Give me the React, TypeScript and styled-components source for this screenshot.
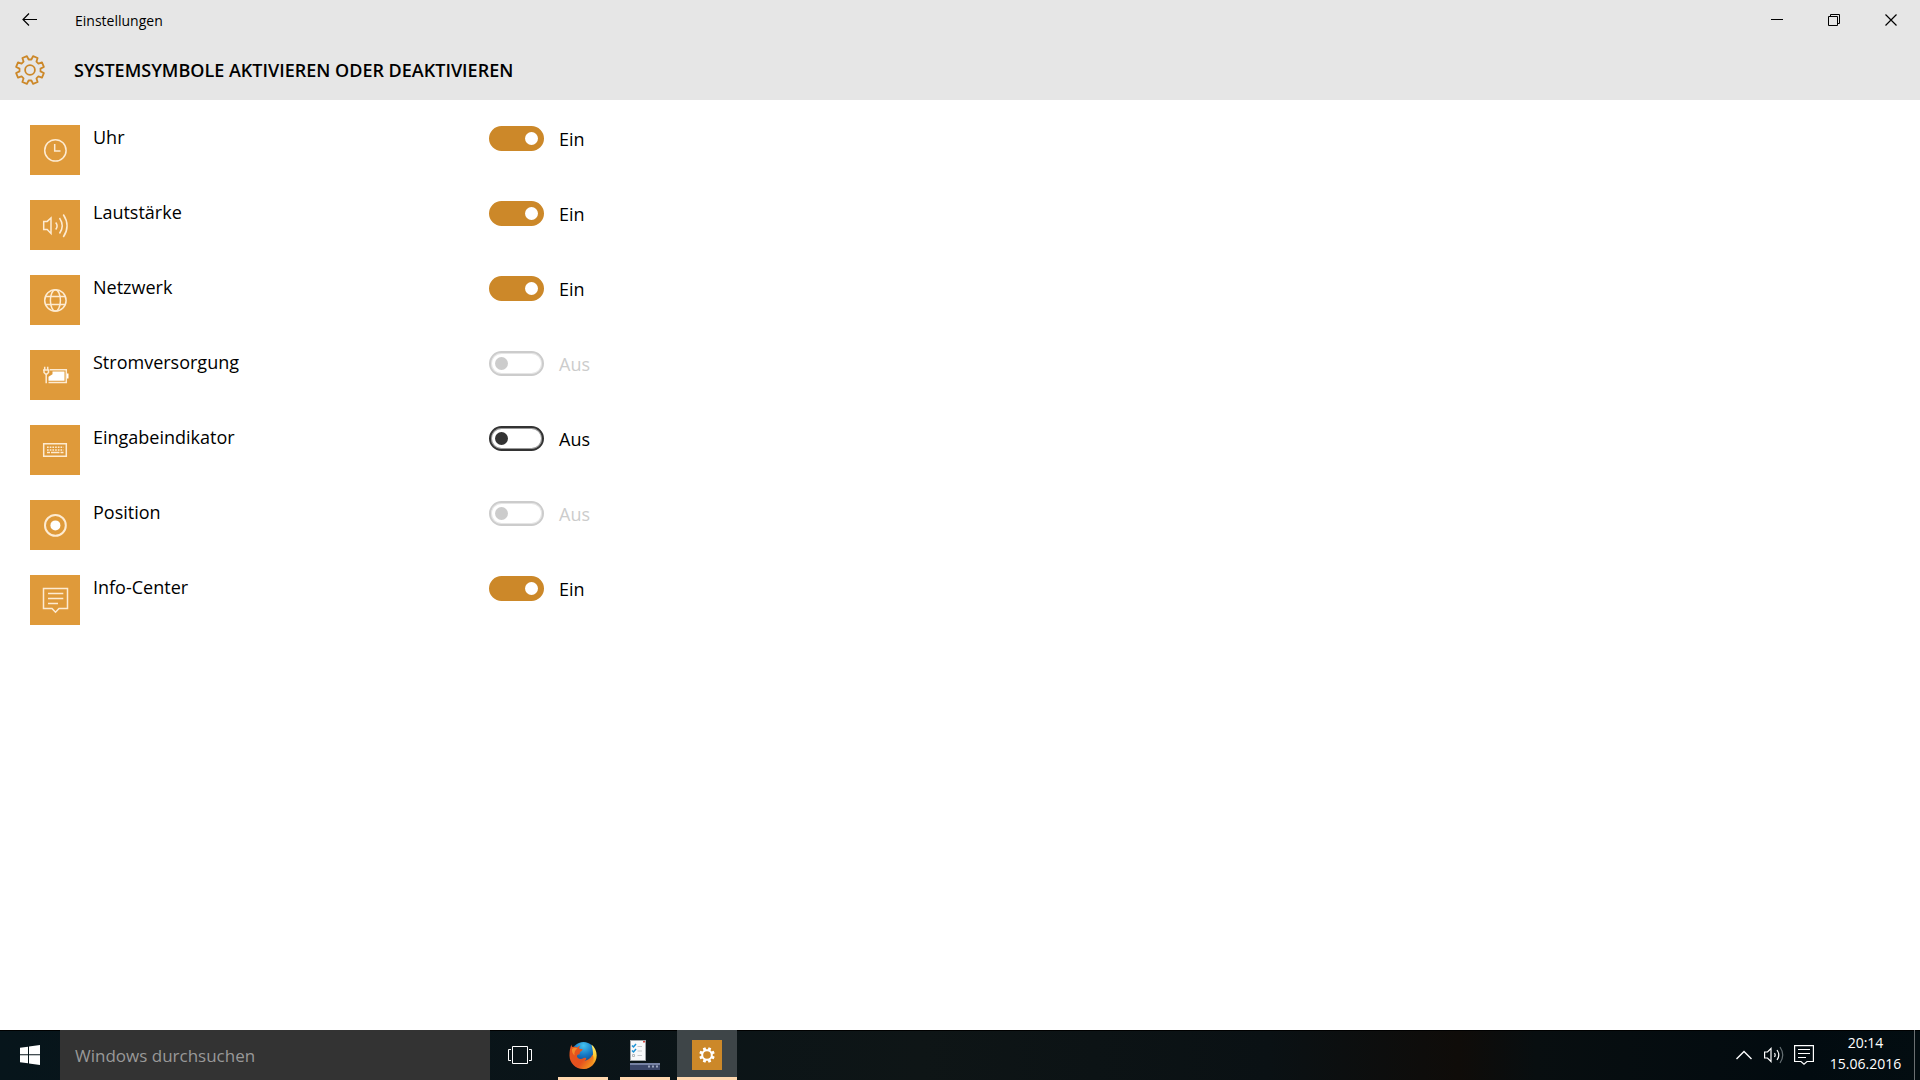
import React, { useState } from "react";
import styled, { createGlobalStyle, css } from "styled-components";

const colors = {
  accent: "#cc8829",
  tile: "#df9a3a",
  header: "#e6e6e6",
  disabled: "#cccccc",
  dark: "#333333",
  underline: "#ffd7ae",
};

const GlobalStyle = createGlobalStyle`
  *, *::before, *::after { box-sizing: border-box; }
  body {
    margin: 0;
    background: #fff;
    color: #000;
    font-family: "Open Sans", "Noto Sans", sans-serif;
  }
  button, input { font: inherit; color: inherit; }
`;

const Screen = styled.div`
  display: flex;
  flex-direction: column;
  min-height: 100vh;
`;

const Header = styled.header`
  background: ${colors.header};
`;

const TitleBar = styled.div`
  display: flex;
  height: 40px;
`;

const plainButton = css`
  display: flex;
  align-items: center;
  justify-content: center;
  padding: 0;
  border: 0;
  background: transparent;
`;

const BackButton = styled.button`
  ${plainButton}
  width: 60px;
`;

const WindowTitle = styled.span`
  flex: 1;
  padding-left: 15px;
  font-size: 14px;
  line-height: 42px;
`;

const WindowButton = styled.button`
  ${plainButton}
  width: 57px;
`;

const Heading = styled.div`
  display: flex;
  align-items: center;
  height: 60px;
`;

const HeadingIcon = styled.span`
  display: flex;
  justify-content: center;
  width: 60px;
`;

const PageTitle = styled.h1`
  margin: 0;
  padding-left: 14px;
  font-size: 18px;
  font-weight: 600;
  line-height: 24px;
`;

const Settings = styled.main`
  flex: 1;
  padding: 25px 30px;
`;

const SettingList = styled.ul`
  display: flex;
  flex-direction: column;
  gap: 25px;
  margin: 0;
  padding: 0;
  list-style: none;
`;

const SettingRow = styled.li`
  display: grid;
  grid-template-columns: 50px 383px 55px auto;
  column-gap: 13px;
  align-items: start;
`;

const Tile = styled.span`
  display: flex;
  align-items: center;
  justify-content: center;
  width: 50px;
  height: 50px;
  background: ${colors.tile};
`;

const SettingName = styled.label`
  font-size: 18px;
  line-height: 25px;
`;

const Toggle = styled.input`
  display: flex;
  align-items: center;
  appearance: none;
  width: 55px;
  height: 25px;
  margin: 1px 0 0;
  padding: 0 4px;
  border: 2px solid ${colors.dark};
  border-radius: 13px;
  box-shadow: inset 0 0 0 1px #999;

  &::before {
    content: "";
    width: 13px;
    height: 13px;
    border-radius: 50%;
    background: ${colors.dark};
  }
  &:checked {
    justify-content: flex-end;
    border-color: ${colors.accent};
    background: ${colors.accent};
    box-shadow: none;
  }
  &:checked::before { background: #fff; }
  &:disabled {
    border-color: ${colors.disabled};
    box-shadow: inset 0 0 0 1px #e6e6e6;
  }
  &:disabled::before { background: ${colors.disabled}; }
`;

const ToggleState = styled.output<{ $muted?: boolean }>`
  padding: 2px 0 0 2px;
  font-size: 18px;
  line-height: 25px;
  color: ${(p) => (p.$muted ? colors.disabled : "#000")};
`;

const Taskbar = styled.footer`
  display: flex;
  height: 50px;
  color: #fff;
  background: linear-gradient(90deg, #07151b 0%, #0a1418 30%, #0e1516 48%, #0a1114 66%, #0f0c09 76%, #080e10 80%, #020b10 94%, #030d11 100%);
  box-shadow: inset 0 1px #000;
`;

const TaskButton = styled.button`
  ${plainButton}
  width: 60px;
`;

const Search = styled.input`
  width: 430px;
  padding: 0 15px;
  border: 0;
  border-radius: 0;
  outline: 0;
  background: ${colors.dark};
  font-size: 17px;

  &::placeholder { color: #999; opacity: 1; }
`;

const RunningApps = styled.nav`
  display: flex;
  flex: 1;
  gap: 2px;
  padding-left: 3px;
`;

const AppButton = styled.button<{ $active?: boolean }>`
  ${plainButton}
  width: ${(p) => (p.$active ? 60 : 50)}px;
  margin: 0 ${(p) => (p.$active ? 0 : 5)}px;
  background: ${(p) => (p.$active ? "#3e4548" : "transparent")};
  box-shadow: inset 0 -3px ${colors.underline};
`;

const SettingsBadge = styled.span`
  display: flex;
  align-items: center;
  justify-content: center;
  width: 30px;
  height: 30px;
  background: ${colors.accent};
`;

const TrayButton = styled.button`
  ${plainButton}
  width: 30px;
`;

const Clock = styled.button`
  ${plainButton}
  flex-direction: column;
  width: 95px;
  padding: 0 2px 4px 0;
  font-size: 14px;
  line-height: 21px;
`;

const ShowDesktop = styled.button`
  ${plainButton}
  width: 6px;
  border-left: 1px solid #6b7072;
`;

const gearPath = (center: number, outer: number, root: number) => {
  const point = (radius: number, degrees: number) => {
    const rad = (degrees * Math.PI) / 180;
    return `${(center + radius * Math.cos(rad)).toFixed(2)} ${(center + radius * Math.sin(rad)).toFixed(2)}`;
  };
  const points: string[] = [];
  for (let i = 0; i < 8; i++) {
    const a = 22.5 + i * 45;
    points.push(point(root, a - 15), point(outer, a - 10), point(outer, a + 10), point(root, a + 15));
  }
  return `M${points.join("L")}Z`;
};

const GearOutline = () => (
  <svg width="32" height="32" viewBox="0 0 32 32" fill="none" stroke={colors.accent} strokeWidth="1.8" strokeLinejoin="round" aria-hidden="true">
    <path d={gearPath(16, 14.2, 10.6)} />
    <circle cx="16" cy="16" r="4.9" />
  </svg>
);

const GearSolid = () => (
  <svg width="16" height="16" viewBox="0 0 16 16" aria-hidden="true">
    <path fill="#fff" fillRule="evenodd" d={`${gearPath(8, 7.9, 5.8)}M8 4.2a3.8 3.8 0 1 0 0 7.6a3.8 3.8 0 1 0 0-7.6Z`} />
  </svg>
);

const TileSvg = ({ children }: { children: React.ReactNode }) => (
  <svg width="28" height="28" viewBox="0 0 28 28" fill="none" stroke="#fdebd2" strokeWidth="1.5" aria-hidden="true">
    {children}
  </svg>
);

const ClockIcon = () => (
  <TileSvg>
    <circle cx="14.4" cy="14.4" r="10.700" />
    <path d="M13.700 8v7h5.800" />
  </TileSvg>
);

const VolumeIcon = () => (
  <TileSvg>
    <path d="M2.700 10.400h3.500L10 7v15.500l-3.800-3.900H2.700Z" />
    <path d="M14.700 11.500q2.800 3.500 0 7M18.500 7q5.500 8 0 15.500M22.300 3.500q7.500 11.500 0 22.500" />
  </TileSvg>
);

const GlobeIcon = () => (
  <TileSvg>
    <circle cx="14.400" cy="14.400" r="10.700" />
    <ellipse cx="14.400" cy="14.400" rx="5" ry="10.700" />
    <path d="M4.500 10.500h20M4.500 18.500h20" />
  </TileSvg>
);

const PowerIcon = () => (
  <TileSvg>
    <path d="M9 8.700h16.300v12.800H7.500" />
    <path d="M11.500 10.500H23.500V19.700H7.500v-4l4-2.500Z" fill="#fff" stroke="none" />
    <path d="M26 12.500h1.500v5h-1.500Z" fill="#fff" stroke="none" />
    <path d="M3.700 5.700v3M6.700 5.700v3M2 9h6.500M3 9v2.500l1.500 1.500h1.500l1.500-1.500V9M5.200 13v9.300" />
  </TileSvg>
);

const KeyboardIcon = () => (
  <TileSvg>
    <path d="M2.700 7.700h22.600v12.600H2.700Z" />
    <path d="M6 11.300h16.500M6 13.900h16.500" strokeDasharray="1.700 1" />
    <path d="M6 16.600h3M10 16.600h8.500M19.500 16.600h3" />
  </TileSvg>
);

const PositionIcon = () => (
  <TileSvg>
    <circle cx="14.400" cy="14.400" r="10.400" strokeWidth="2" />
    <circle cx="14.400" cy="14.400" r="5" fill="#fff" stroke="none" />
  </TileSvg>
);

const InfoIcon = () => (
  <TileSvg>
    <path d="M2.500 2.500h24v20h-8.500l-3.500 3.700-3.500-3.700h-8.500Z" />
    <path d="M7 7.500h15.300M7 12.500h15.300M7 17.500h10" />
  </TileSvg>
);

const FirefoxIcon = () => (
  <svg width="28" height="28" viewBox="0 0 28 28" aria-hidden="true">
    <defs>
      <radialGradient id="globe" cx="0.5" cy="0.15" r="0.8">
        <stop offset="0" stopColor="#45c3ee" />
        <stop offset="0.5" stopColor="#1678c4" />
        <stop offset="1" stopColor="#123a7c" />
      </radialGradient>
      <linearGradient id="fox" x1="0" y1="0.1" x2="1" y2="0.9">
        <stop offset="0" stopColor="#e8571c" />
        <stop offset="0.6" stopColor="#e5501f" />
        <stop offset="1" stopColor="#f7a51d" />
      </linearGradient>
      <linearGradient id="tail" x1="0" y1="0" x2="0" y2="1">
        <stop offset="0" stopColor="#fff27a" />
        <stop offset="0.5" stopColor="#fdc62c" />
        <stop offset="1" stopColor="#ee6a1c" />
      </linearGradient>
    </defs>
    <circle cx="14.500" cy="13" r="12" fill="url(#globe)" />
    <path d="M22.500 3.500c5 4 6.500 11 4 16.500-2 4.500-6 7.500-11 8 5-4 8.500-9 8.500-14.500 0-3.500-.500-6-1.500-10Z" fill="url(#tail)" />
    <path d="M2.500 3.500c0 1.200.300 2 1 2.600 1.500-.600 3.500-.400 5 .300.700-.900 2-1.700 3-1.900-1 1-1.500 2-1.300 3 .800.500 2 .500 3.300.700.200.900-.700 1.800-2.500 2.800l-.500 2.500c-1.500-.200-2.700.300-2.500 2 .500 2.200 3 3 5 2.200 1.800-.700 2.800-1.500 4-.700.800.700 0 1.800-1.500 2.500 3.500 0 6.500-2.500 8-6 1.500 2.500 1.500 5 .500 7.500C22 25.500 18.500 28 14 28 6.500 28 .500 22 .500 14.500c0-4 .500-8 2-11Z" fill="url(#fox)" />
    <path d="M3 8c2-1.500 4-1.500 5.500-.500C6 9 5 11.500 5.500 14.500 3.500 12.500 2.700 10.500 3 8Z" fill="#f28a2b" />
  </svg>
);

const TasksIcon = () => (
  <svg width="30" height="30" viewBox="0 0 30 30" aria-hidden="true">
    <path d="M0 0h16v21H0Z" fill="#9ea3a6" />
    <path d="M1 1h14v19H1Z" fill="#f8f9fa" />
    <path d="M13 1h2v1.500h-2Z" fill="#d9453c" />
    <path d="M2 5.500l1.500 1.500L6 4M2 10.500l1.500 1.500L6 9" stroke="#1c93d6" strokeWidth="1.500" fill="none" />
    <path d="M7.500 6.500H12M7.500 11H12M7.500 15.500H12" stroke="#c4c8cb" />
    <path d="M2.500 14.500h2v2h-2Z" stroke="#b5b9bc" fill="none" />
    <path d="M0 23h30v7H0Z" fill="#3b4668" />
    <path d="M0 23h30v2H0Z" fill="#7682a3" />
    <path d="M18 25.500h2v2h-2ZM22 25.500h2v2h-2ZM26 25.500h2v2h-2Z" fill="#9ba5bd" />
  </svg>
);

const items = [
  { id: "clock", name: "Uhr", icon: <ClockIcon />, on: true },
  { id: "volume", name: "Lautstärke", icon: <VolumeIcon />, on: true },
  { id: "network", name: "Netzwerk", icon: <GlobeIcon />, on: true },
  { id: "power", name: "Stromversorgung", icon: <PowerIcon />, on: false, disabled: true },
  { id: "input", name: "Eingabeindikator", icon: <KeyboardIcon />, on: false },
  { id: "position", name: "Position", icon: <PositionIcon />, on: false, disabled: true },
  { id: "info", name: "Info-Center", icon: <InfoIcon />, on: true },
];

type Item = (typeof items)[number];

const Setting = ({ item }: { item: Item }) => {
  const [on, setOn] = useState(item.on);
  return (
    <SettingRow>
      <Tile>{item.icon}</Tile>
      <SettingName htmlFor={item.id}>{item.name}</SettingName>
      <Toggle
        id={item.id}
        type="checkbox"
        role="switch"
        checked={on}
        disabled={item.disabled}
        onChange={(e) => setOn(e.target.checked)}
      />
      <ToggleState htmlFor={item.id} $muted={item.disabled}>{on ? "Ein" : "Aus"}</ToggleState>
    </SettingRow>
  );
};

export default function App() {
  return (
    <Screen>
      <GlobalStyle />
      <Header>
        <TitleBar>
          <BackButton aria-label="Zurück">
            <svg width="16" height="16" viewBox="0 0 16 16" fill="none" stroke="#000" strokeWidth="1.200">
              <path d="M15 7.500H1M7 1.500 1 7.500 7 13.500" />
            </svg>
          </BackButton>
          <WindowTitle>Einstellungen</WindowTitle>
          <WindowButton aria-label="Minimieren">
            <svg width="13" height="12" viewBox="0 0 13 12" stroke="#000"><path d="M0 5.500h12" /></svg>
          </WindowButton>
          <WindowButton aria-label="Verkleinern">
            <svg width="13" height="12" viewBox="0 0 13 12" fill="none" stroke="#000">
              <path d="M.500 2.500h9v9h-9ZM2.500 2V.500h9v9H10" />
            </svg>
          </WindowButton>
          <WindowButton aria-label="Schließen">
            <svg width="13" height="12" viewBox="0 0 13 12" stroke="#000" strokeWidth="1.200"><path d="M.500 .500l11 11M11.500 .500l-11 11" /></svg>
          </WindowButton>
        </TitleBar>
        <Heading>
          <HeadingIcon><GearOutline /></HeadingIcon>
          <PageTitle>SYSTEMSYMBOLE AKTIVIEREN ODER DEAKTIVIEREN</PageTitle>
        </Heading>
      </Header>

      <Settings>
        <SettingList>
          {items.map((item) => <Setting key={item.id} item={item} />)}
        </SettingList>
      </Settings>

      <Taskbar>
        <TaskButton aria-label="Start">
          <svg width="20" height="20" viewBox="0 0 20 20" fill="#fff">
            <path d="M0 2.800 8 1.700V9.300H0ZM9 1.500 20 0V9.300H9ZM0 10.300H8V18.300L0 17.200ZM9 10.300H20V20L9 18.500Z" />
          </svg>
        </TaskButton>
        <Search type="search" placeholder="Windows durchsuchen" aria-label="Windows durchsuchen" />
        <TaskButton aria-label="Taskansicht">
          <svg width="24" height="18" viewBox="0 0 24 18" fill="none" stroke="#fff">
            <path d="M4.500 .500h15v17h-15ZM3 3.500H.500v11H3M21 3.500h2.500v11H21" />
          </svg>
        </TaskButton>
        <RunningApps aria-label="Apps">
          <AppButton aria-label="Firefox"><FirefoxIcon /></AppButton>
          <AppButton aria-label="Aufgaben"><TasksIcon /></AppButton>
          <AppButton $active aria-label="Einstellungen">
            <SettingsBadge><GearSolid /></SettingsBadge>
          </AppButton>
        </RunningApps>
        <TrayButton aria-label="Ausgeblendete Symbole">
          <svg width="16" height="10" viewBox="0 0 16 10" fill="none" stroke="#fff" strokeWidth="1.400"><path d="M.500 9 8 1.500 15.500 9" /></svg>
        </TrayButton>
        <TrayButton aria-label="Lautstärke">
          <svg width="20" height="20" viewBox="0 0 20 20" fill="none" stroke="#fff" strokeWidth="1.200">
            <path d="M.600 7h2.900L7 3.500v13L3.500 13H.600Z" />
            <path d="M10.500 8q1.300 2 0 4M13 5q3.600 5 0 10" />
            <path d="M16 2q5.500 8 0 16" stroke="#667074" />
          </svg>
        </TrayButton>
        <TrayButton aria-label="Info-Center">
          <svg width="20" height="20" viewBox="0 0 20 20" fill="none" stroke="#fff" strokeWidth="1.200">
            <path d="M.600 .600h18.800v15.900h-6.400L10 19.200 7 16.500H.600Z" />
            <path d="M4 4.500h12M4 8.500h12M4 12.500h8" />
          </svg>
        </TrayButton>
        <Clock>
          <time>20:14</time>
          <time>15.06.2016</time>
        </Clock>
        <ShowDesktop aria-label="Desktop anzeigen" />
      </Taskbar>
    </Screen>
  );
}
